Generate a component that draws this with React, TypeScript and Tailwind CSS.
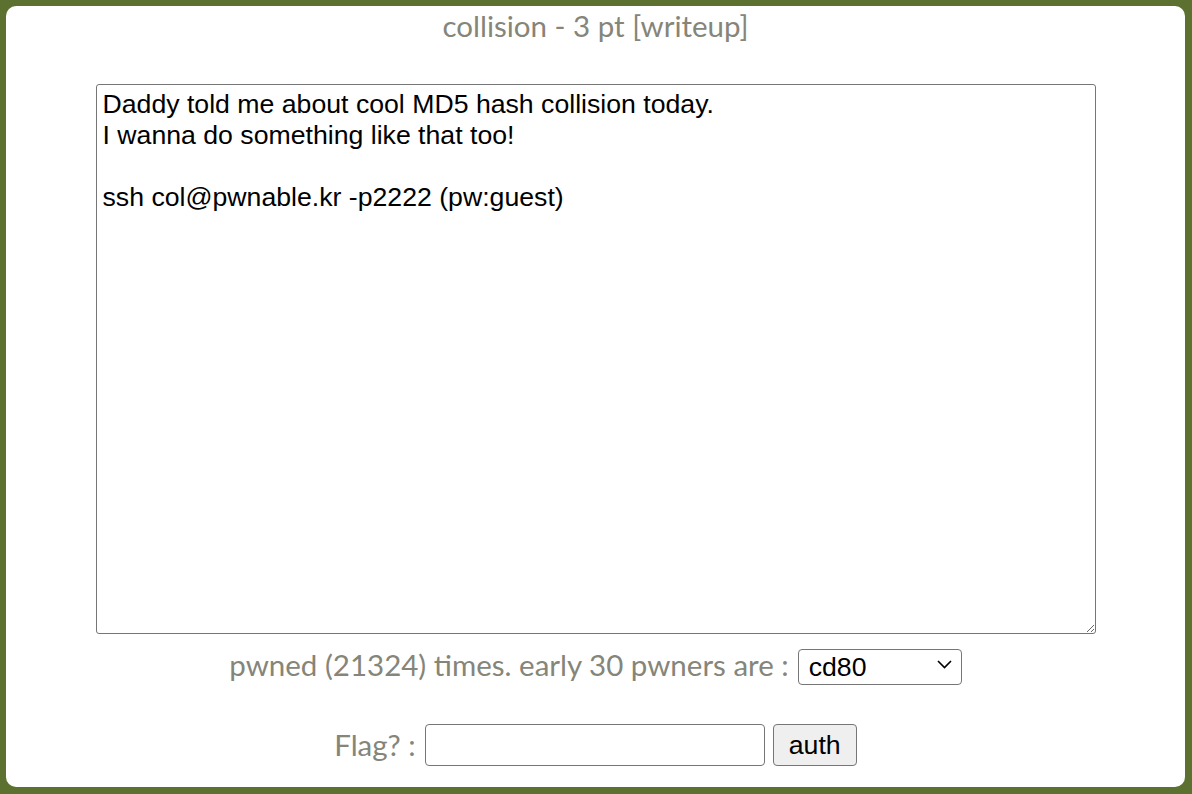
import React from "react";

const body = `Daddy told me about cool MD5 hash collision today.
I wanna do something like that too!

ssh col@pwnable.kr -p2222 (pw:guest)`;

export default function App() {
  return (
    <div className="h-[794px] w-full bg-[#5c7030] pt-[6px] pl-[6px] pr-[7px] pb-[7px]">
      <div className="flex h-full w-full flex-col items-center rounded-[10px] bg-white">
        {/* Title */}
        <h1 className="mt-[3px] font-['Lato','Open_Sans',sans-serif] text-[29.5px] leading-[34px] text-[#858579]">
          collision - 3 pt [writeup]
        </h1>

        {/* Description */}
        <textarea
          readOnly
          value={body}
          className="mt-[41px] h-[550px] w-[1000px] resize rounded-[3px] border border-[#767676] px-[6px] pt-[4px] pb-[1px] font-['Liberation_Sans',Arial,sans-serif] text-[26.67px] leading-[31px] text-black outline-none"
        />

        {/* Pwners */}
        <div className="mt-[13px] flex h-[36px] items-center gap-[9px] font-['Lato','Open_Sans',sans-serif] text-[29.5px] leading-[36px] text-[#858579]">
          <span>pwned (21324) times. early 30 pwners are :</span>
          <div className="relative h-[36px]">
            <select className="h-[36px] w-[164px] appearance-none rounded-[4px] border border-[#767676] bg-white pl-[10px] font-['Liberation_Sans',Arial,sans-serif] text-[26.67px] leading-[34px] text-black outline-none">
              <option>cd80</option>
            </select>
            <svg
              className="pointer-events-none absolute right-[10px] top-[13px]"
              width="15"
              height="9"
              viewBox="0 0 15 9"
              fill="none"
              stroke="black"
              strokeWidth="1.6"
            >
              <path d="M1 1 L7.5 7.5 L14 1" />
            </svg>
          </div>
        </div>

        {/* Flag */}
        <div className="mt-[41px] flex h-[42px] items-center font-['Lato','Open_Sans',sans-serif] text-[29.5px] leading-[42px] text-[#858579]">
          <span className="mr-[9px]">Flag? :</span>
          <input
            type="text"
            className="h-[42px] w-[340px] rounded-[4px] border border-[#767676] bg-white px-2 text-[24px] text-black outline-none"
          />
          <button className="ml-[8px] h-[42px] w-[84px] rounded-[4px] border border-[#767676] bg-[#efefef] font-['Liberation_Sans',Arial,sans-serif] text-[26.67px] leading-[40px] text-black">
            auth
          </button>
        </div>
      </div>
    </div>
  );
}
